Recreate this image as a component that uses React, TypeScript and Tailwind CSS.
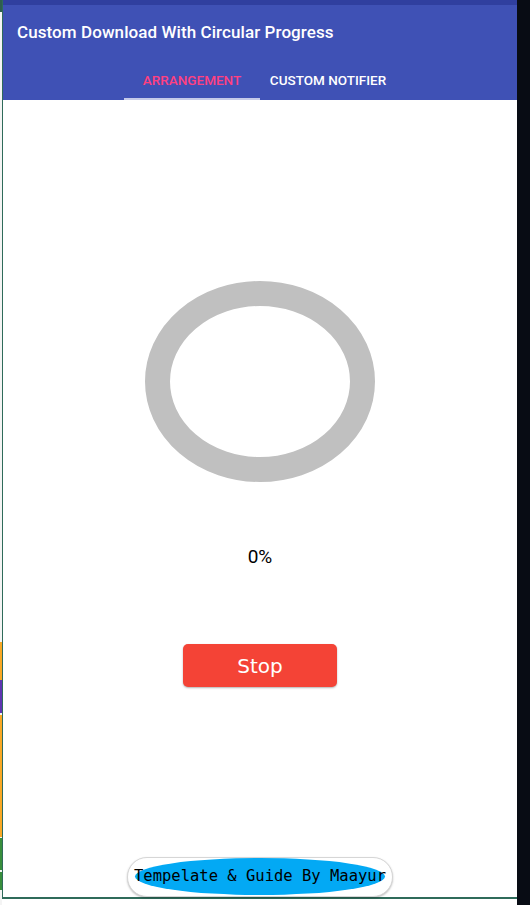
export default function App() {
  return (
    <div className="w-[530px] h-[905px] flex bg-white overflow-hidden">
      {/* left edge: desktop bits showing behind the window */}
      <div className="w-[2px] h-full flex flex-col bg-[#f4f4f4]">
        <div className="h-[12px] bg-[#2f5e4e]" />
        <div className="h-[630px]" />
        <div className="h-[38px] bg-[#f9a825]" />
        <div className="h-[33px] bg-[#5e35b1]" />
        <div className="h-[2px]" />
        <div className="h-[122px] bg-[#f9a825]" />
        <div className="h-[1px]" />
        <div className="h-[32px] bg-[#388e3c]" />
        <div className="h-[2px]" />
        <div className="h-[18px] bg-[#388e3c]" />
      </div>
      <div className="w-[1px] h-[899px] bg-[#2f6b5a]" />

      {/* phone window */}
      <div className="w-[514px] h-full flex flex-col">
        <div className="h-[5px] bg-[#303f9f]" />
        <div className="h-[95px] bg-[#3f51b5] flex flex-col">
          <div className="h-[56px] flex items-center pl-[14px]">
            <span className="text-white text-[17px] font-medium tracking-[0.08px]" style={{ fontFamily: 'Roboto, sans-serif' }}>
              Custom Download With Circular Progress
            </span>
          </div>
          <div className="flex-1 flex pl-[121px]">
            <div className="w-[136px] flex flex-col">
              <div className="flex-1 flex items-center justify-center pt-[1px] text-[13.5px] font-medium text-[#ff4081]" style={{ fontFamily: 'Roboto, sans-serif' }}>
                ARRANGEMENT
              </div>
              <div className="h-[2px] bg-[#c5cae9]" />
            </div>
            <div className="w-[136px] flex items-center justify-center pt-[1px] pb-[2px] text-[13.5px] font-medium text-white" style={{ fontFamily: 'Roboto, sans-serif' }}>
              CUSTOM NOTIFIER
            </div>
          </div>
        </div>

        <div className="flex-1 flex flex-col items-center">
          <div className="mt-[181px] w-[230px] h-[201px]">
            <svg width="230" height="201" viewBox="0 0 230 201">
              <ellipse cx="115" cy="100.5" rx="102.5" ry="88" fill="none" stroke="#c0c0c0" strokeWidth="25" />
            </svg>
          </div>
          <div className="mt-[64px] h-[22px] leading-[22px] text-[19px] text-black" style={{ fontFamily: 'Roboto, sans-serif' }}>
            0%
          </div>
          <button className="mt-[76px] w-[154px] h-[43px] rounded-[5px] bg-[#f44336] text-white text-[20px] shadow-[0_1px_2px_rgba(0,0,0,0.3)] flex items-center justify-center" style={{ fontFamily: '"DejaVu Sans", sans-serif' }}>
            Stop
          </button>

          <div className="mt-auto w-[266px] h-[40px] rounded-full border border-[#d6d6d6] bg-white shadow-[0_1px_2px_rgba(0,0,0,0.25)] relative flex items-center justify-center">
            <div className="absolute left-[7px] right-[7px] top-0 bottom-[1px] rounded-[50%] bg-[#03a9f4]" />
            <span className="relative text-[15.5px] text-black whitespace-nowrap" style={{ fontFamily: '"DejaVu Sans Mono", monospace' }}>
              Tempelate &amp; Guide By Maayur
            </span>
          </div>
          <div className="w-full h-[2px] bg-[#2f6b5a]" />
          <div className="h-[6px]" />
        </div>
      </div>

      {/* right edge */}
      <div className="flex-1 h-full bg-[#080c14]" />
    </div>
  );
}
